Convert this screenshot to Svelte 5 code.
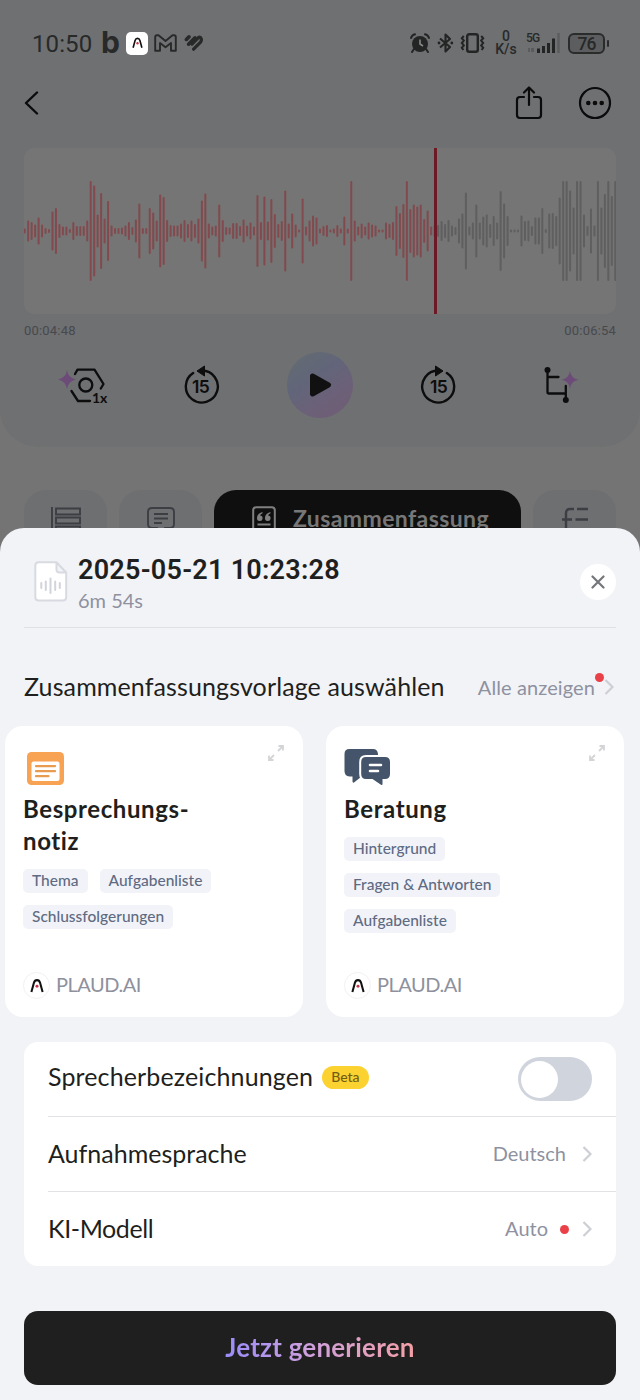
<script lang="ts">
    // bar heights of the waveform, top to bottom, in px
    const wave = [
        5, 21, 18, 13, 27, 13, 6, 4, 39, 46, 14, 9, 9, 4, 18, 10, 10, 10, 21, 100,
        91, 33, 76, 25, 60, 11, 6, 6, 7, 11, 18, 8, 23, 55, 6, 6, 46, 37, 21, 73,
        68, 22, 12, 11, 11, 15, 22, 14, 21, 14, 25, 61, 75, 15, 9, 11, 53, 22, 8, 7,
        16, 16, 10, 23, 11, 17, 9, 72, 18, 69, 19, 64, 34, 14, 20, 81, 15, 35, 13, 3,
        65, 9, 21, 31, 27, 5, 10, 12, 3, 5, 12, 5, 29, 5, 100, 21, 9, 15, 9, 17,
        13, 11, 3, 3, 17, 14, 18, 50, 36, 54, 100, 44, 53, 49, 53, 24, 41, 9, 12, 12,
        20, 14, 22, 11, 8, 25, 35, 77, 9, 17, 53, 17, 29, 33, 14, 30, 17, 80, 55, 30,
        3, 3, 3, 31, 20, 21, 10, 27, 27, 46, 4, 35, 36, 30, 67, 100, 100, 81, 47, 100,
        100, 33, 10, 45, 11, 100, 47, 74, 100, 70, 100
    ];
    const playedBars = 118;

    const templates = [
        {
            icon: "note",
            title: ["Besprechungs-", "notiz"],
            tags: [["Thema", "Aufgabenliste"], ["Schlussfolgerungen"]]
        },
        {
            icon: "chat",
            title: ["Beratung"],
            tags: [["Hintergrund"], ["Fragen & Antworten"], ["Aufgabenliste"]]
        }
    ];

    let speakerLabels = $state(false);
</script>

{#snippet logo()}
    <path d="M1.5 14 L4.2 4 Q5 1.2 7.5 1.2 Q10 1.2 10.8 4 L13.5 14" fill="none" stroke="#111" stroke-width="2.2" />
    <circle cx="7.5" cy="7.8" r="1.6" fill="#c8354a" />
{/snippet}

{#snippet chevron()}
    <svg class="chevron" width="10" height="16" viewBox="0 0 10 16">
        <path d="M1.5 1 L8.5 8 L1.5 15" fill="none" stroke="#cdcfd4" stroke-width="2.2" />
    </svg>
{/snippet}

<div class="phone">
    <div class="recorder">
        <div class="player">
            <div class="status">
                <span class="clock">10:50</span>
                <span class="b">b</span>
                <span class="app-badge">
                    <svg width="11" height="12" viewBox="0 0 15 15">{@render logo()}</svg>
                </span>
                <svg class="gmail" width="23" height="18" viewBox="0 0 23 18">
                    <path d="M1.2 16.8 V3 Q1.2 1.2 3 1.2 H4.5 L11.5 7 L18.5 1.2 H20 Q21.8 1.2 21.8 3 V16.8 H17 V9 L11.5 13.2 L6 9 V16.8 Z" fill="none" stroke="#282929" stroke-width="1.9" stroke-linejoin="round" />
                </svg>
                <svg class="heart" width="20" height="18" viewBox="0 0 20 18">
                    <g fill="none" stroke="#282929" stroke-width="3.6" stroke-linecap="round" stroke-linejoin="round">
                        <path d="M2.4 5.4 L5 2.8" />
                        <path d="M4.6 10.2 L11 3.8" />
                        <path d="M9.6 15.2 L16.6 8.2 Q18.2 5.8 16.6 3.6 Q15.4 2.8 14.4 3.6 L8 10" stroke-width="3.2" />
                    </g>
                </svg>

                <div class="indicators">
                    <svg width="20" height="20" viewBox="0 0 20 20">
                        <circle cx="10" cy="11" r="8" fill="#232424" />
                        <path d="M1 5 Q2 2 5 1.3 M19 5 Q18 2 15 1.3 M4 16 L2 19 M16 16 L18 19" fill="none" stroke="#232424" stroke-width="2" stroke-linecap="round" />
                        <path d="M10 6.5 V11 L13 13" fill="none" stroke="#85878a" stroke-width="1.6" />
                    </svg>
                    <svg class="bluetooth" width="17" height="20" viewBox="0 0 17 20">
                        <path d="M3 5.5 L13 14 L8.5 18.5 V1.5 L13 6 L3 14.5" fill="none" stroke="#232424" stroke-width="2.1" stroke-linejoin="round" />
                        <circle cx="2" cy="10" r="1.4" fill="#232424" />
                        <circle cx="14.8" cy="10" r="1.4" fill="#232424" />
                    </svg>
                    <svg class="vibrate" width="25" height="20" viewBox="0 0 25 20">
                        <rect x="7.2" y="1.2" width="10.6" height="17.6" rx="2" fill="none" stroke="#232424" stroke-width="2.4" />
                        <path d="M3.8 3 L1.8 5.2 L3.8 7.6 L1.8 10 L3.8 12.4 L1.8 14.8 L3.4 17 M21.2 3 L23.2 5.2 L21.2 7.6 L23.2 10 L21.2 12.4 L23.2 14.8 L21.6 17" fill="none" stroke="#232424" stroke-width="2" />
                    </svg>
                    <span class="speed"><span>0</span><span>K/s</span></span>
                    <span class="signal">
                        <span class="five-g">5G</span>
                        <svg width="33" height="20" viewBox="0 0 33 20">
                            <path d="M1 17 h2 m1 0 h3" stroke="#5a5b5d" stroke-width="4" />
                            <path d="M11.5 20 V15.5 M16.5 20 V13 M21.5 20 V10 M26.5 20 V5.5" stroke="#232424" stroke-width="3" />
                            <path d="M31.5 20 V0" stroke="#5c5d5f" stroke-width="2.6" />
                        </svg>
                    </span>
                    <span class="battery">76</span>
                </div>
            </div>

            <div class="toolbar">
                <svg class="back" width="15" height="24" viewBox="0 0 15 24">
                    <path d="M13 1.5 L2 12 L13 22.5" fill="none" stroke="#0b0b0c" stroke-width="2.4" stroke-linecap="round" stroke-linejoin="round" />
                </svg>
                <svg class="share" width="28" height="34" viewBox="0 0 28 34">
                    <g fill="none" stroke="#0b0b0c" stroke-width="2.2" stroke-linecap="round" stroke-linejoin="round">
                        <path d="M9 11 H5 Q2 11 2 14 V29 Q2 32 5 32 H23 Q26 32 26 29 V14 Q26 11 23 11 H19" />
                        <path d="M14 19 V1.5 M9 6.5 L14 1.5 L19 6.5" />
                    </g>
                </svg>
                <svg width="34" height="34" viewBox="0 0 34 34">
                    <circle cx="17" cy="17" r="15" fill="none" stroke="#0b0b0c" stroke-width="2.2" />
                    <circle cx="10.3" cy="17" r="2.3" fill="#0b0b0c" />
                    <circle cx="17" cy="17" r="2.3" fill="#0b0b0c" />
                    <circle cx="23.7" cy="17" r="2.3" fill="#0b0b0c" />
                </svg>
            </div>

            <div class="waveform">
                <svg width="592" height="166" viewBox="0 0 592 166">
                    {#each wave as height, i}
                        <rect x={i * 3.474 - 0.3} y={83 - height / 2} width="2" {height} rx="1" fill={i < playedBars ? "#824a4e" : "#5f5f60"} />
                    {/each}
                    <rect x="410" y="0" width="3" height="166" fill="#6e1a26" />
                </svg>
            </div>
            <div class="times">
                <span>00:04:48</span>
                <span>00:06:54</span>
            </div>

            <div class="controls">
                <svg class="speed-icon" width="52" height="40" viewBox="0 0 52 40">
                    <path d="M10 5 Q11 13 19 14.5 Q11 16 10 24 Q9 16 1 14.5 Q9 13 10 5 Z" fill="#6c4b78" />
                    <g fill="none" stroke="#0d0d0e" stroke-width="2.3" stroke-linecap="round" stroke-linejoin="round">
                        <path d="M18 9 L20.5 4.6 H37.5 L46.5 19 L43.8 23.5" />
                        <path d="M14.5 26 L21 36 H33" />
                        <circle cx="28.8" cy="20" r="6.5" />
                    </g>
                    <text x="35" y="37.5" font-size="14" font-weight="700" fill="#0d0d0e">1x</text>
                </svg>
                <svg class="rewind" width="38" height="40" viewBox="0 0 38 40">
                    <path d="M10.5 8.5 A16 16 0 1 0 19 5.5" transform="rotate(3 19 21)" fill="none" stroke="#0d0d0e" stroke-width="2.4" stroke-linecap="round" />
                    <path d="M15 6 L22.5 1 V11 Z" fill="#0d0d0e" stroke="#0d0d0e" stroke-linejoin="round" />
                    <text class="seconds" x="18.5" y="27.5" text-anchor="middle">15</text>
                </svg>
                <button class="play" aria-label="Play">
                    <svg width="26" height="28" viewBox="0 0 26 28">
                        <path d="M5.5 5 L21.5 14 L5.5 23 Z" fill="#111112" stroke="#111112" stroke-width="5" stroke-linejoin="round" />
                    </svg>
                </button>
                <svg class="forward" width="38" height="40" viewBox="0 0 38 40">
                    <path d="M27.5 8.5 A16 16 0 1 1 19 5.5" transform="rotate(-3 19 21)" fill="none" stroke="#0d0d0e" stroke-width="2.4" stroke-linecap="round" />
                    <path d="M23 6 L15.5 1 V11 Z" fill="#0d0d0e" stroke="#0d0d0e" stroke-linejoin="round" />
                    <text class="seconds" x="18.5" y="27.5" text-anchor="middle">15</text>
                </svg>
                <svg class="branch" width="36" height="40" viewBox="0 0 36 40">
                    <path d="M27 6 Q28 13.5 35.5 14.8 Q28 16 27 23.5 Q26 16 18.5 14.8 Q26 13.5 27 6 Z" fill="#6c4b78" />
                    <path d="M4.5 5 V27 Q4.5 28.5 6 28.5 H22.5 M4.5 12 H15.5 M22.8 21 V35" fill="none" stroke="#0d0d0e" stroke-width="2.3" stroke-linecap="round" />
                    <circle cx="4.5" cy="5" r="3" fill="#0d0d0e" />
                    <circle cx="22.8" cy="35" r="3" fill="#0d0d0e" />
                </svg>
            </div>
        </div>

        <div class="tabs">
            <div class="tab">
                <svg width="32" height="30" viewBox="0 0 32 30">
                    <path d="M2 1 V29 M6 2.5 H30 V8.5 H6 Z M6 11.5 H30 V17.5 H6 Z M6 20.5 H30 V26.5 H6 Z" fill="none" stroke="#3c3e44" stroke-width="1.9" />
                </svg>
            </div>
            <div class="tab">
                <svg width="30" height="30" viewBox="0 0 30 30">
                    <path d="M6 2 H24 Q28 2 28 6 V18 Q28 22 24 22 H19 L15 26 L11 22 H6 Q2 22 2 18 V6 Q2 2 6 2 Z M8 8 H22 M8 12.5 H22 M8 17 H16" fill="none" stroke="#3c3e44" stroke-width="1.9" />
                </svg>
            </div>
            <div class="tab active">
                <svg width="24" height="32" viewBox="0 0 24 32">
                    <rect x="1.2" y="1.2" width="21.6" height="28" rx="3" fill="none" stroke="#808080" stroke-width="2" />
                    <path d="M10.5 6 Q5 7.5 5 12 A2.8 2.8 0 1 0 8 9.4 Q8.5 8 10.5 7.3 Z M18.5 6 Q13 7.5 13 12 A2.8 2.8 0 1 0 16 9.4 Q16.5 8 18.5 7.3 Z" fill="#808080" />
                    <path d="M5.5 18.5 H18.5 M5.5 24 H18.5" stroke="#808080" stroke-width="1.8" />
                </svg>
                <span>Zusammenfassung</span>
            </div>
            <div class="tab">
                <svg width="28" height="30" viewBox="0 0 28 30">
                    <path d="M13 3 H9 Q5 3 5 7 V30 M1 13.5 H11 M16 3 H27 M14.5 13.5 H27" fill="none" stroke="#3c3e44" stroke-width="2.4" />
                </svg>
            </div>
        </div>
    </div>

    <div class="sheet">
        <header>
            <svg class="file" width="34" height="41" viewBox="0 0 34 41">
                <path d="M4.5 1.3 H22.5 L32.2 11.5 V36 Q32.2 39.5 28.7 39.5 H4.7 Q1.3 39.5 1.3 36 V4.8 Q1.3 1.3 4.5 1.3 Z M22.5 1.5 V8.5 Q22.5 11.5 25.5 11.5 H32" fill="#fff" stroke="#d8dae1" stroke-width="2" stroke-linejoin="round" />
                <path d="M7.3 22 V27 M11.8 20.5 V29 M16.5 17.5 V32 M21.2 20.5 V29 M25.8 22 V27" stroke="#d2d4db" stroke-width="2" stroke-linecap="round" />
            </svg>
            <div class="recording">
                <h1>2025-05-21 10:23:28</h1>
                <p>6m 54s</p>
            </div>
            <button class="close" aria-label="Close">
                <svg width="14" height="14" viewBox="0 0 14 14">
                    <path d="M1.5 1.5 L12.5 12.5 M12.5 1.5 L1.5 12.5" stroke="#75767a" stroke-width="2.2" stroke-linecap="round" />
                </svg>
            </button>
        </header>

        <div class="section-title">
            <h2>Zusammenfassungsvorlage auswählen</h2>
            <span class="show-all">Alle anzeigen<i class="dot"></i></span>
            {@render chevron()}
        </div>

        <div class="cards">
            {#each templates as template}
                <article class="card">
                    <div class="card-top">
                        {#if template.icon === "note"}
                            <svg class="note" width="37" height="33" viewBox="0 0 37 33">
                                <rect width="37" height="33" rx="4.5" fill="#f8a254" />
                                <rect x="4.5" y="9.5" width="28" height="19.5" rx="2" fill="#fff" />
                                <path d="M9 14.2 H28 M9 19.2 H28 M9 24.2 H21.5" stroke="#e89c52" stroke-width="2.2" stroke-linecap="round" />
                            </svg>
                        {:else}
                            <svg class="chat" width="47" height="37" viewBox="0 0 47 37">
                                <path d="M5.5 0 H29 Q33.5 0 34 5 V28 H17 L10 33.5 Q8.5 34 8.5 32.5 V27.5 H5.5 Q0.5 27 0.5 22 V5 Q0.5 0 5.5 0 Z" fill="#44546a" />
                                <path d="M22 8 H41 Q46 8 46 13 V25 Q46 30 41 30 H38.5 V35 Q38.5 36.5 37 35.7 L28.5 30 H22 Q17.2 30 17.2 25 V13 Q17.2 8 22 8 Z" fill="#44546a" stroke="#fff" stroke-width="4" />
                                <path d="M22 8 H41 Q46 8 46 13 V25 Q46 30 41 30 H38.5 V35 Q38.5 36.5 37 35.7 L28.5 30 H22 Q17.2 30 17.2 25 V13 Q17.2 8 22 8 Z" fill="#44546a" />
                                <path d="M26 16 H37 M26 22 H34" stroke="#fff" stroke-width="2.6" stroke-linecap="round" />
                            </svg>
                        {/if}
                        <svg class="expand" width="18" height="18" viewBox="0 0 18 18">
                            <path d="M11 7 L15.5 2.5 M11.5 2 H16 V6.5 M7 11 L2.5 15.5 M2 11.5 V16 H6.5" fill="none" stroke="#d3d4d6" stroke-width="1.8" />
                        </svg>
                    </div>
                    <h3>
                        {#each template.title as line}
                            <span>{line}</span>
                        {/each}
                    </h3>
                    <div class="tags">
                        {#each template.tags as row}
                            <div class="tag-row">
                                {#each row as tag}
                                    <span class="tag">{tag}</span>
                                {/each}
                            </div>
                        {/each}
                    </div>
                    <div class="author">
                        <span class="avatar">
                            <svg width="14" height="14" viewBox="0 0 15 15">{@render logo()}</svg>
                        </span>
                        <span class="name">PLAUD.AI</span>
                    </div>
                </article>
            {/each}
        </div>

        <div class="settings">
            <div class="row">
                <span class="label speaker">Sprecherbezeichnungen</span>
                <span class="beta">Beta</span>
                <button
                    class="toggle"
                    class:on={speakerLabels}
                    aria-label="Sprecherbezeichnungen"
                    onclick={() => (speakerLabels = !speakerLabels)}
                ></button>
            </div>
            <div class="row">
                <span class="label">Aufnahmesprache</span>
                <span class="value">Deutsch</span>
                {@render chevron()}
            </div>
            <div class="row">
                <span class="label model">KI-Modell</span>
                <span class="value">Auto</span>
                <i class="dot"></i>
                {@render chevron()}
            </div>
        </div>

        <button class="generate"><span>Jetzt generieren</span></button>
    </div>
</div>

<style>
    :global(body) {
        background: #f2f3f7;
    }

    .phone {
        width: 640px;
        height: 1400px;
        overflow: hidden;
        font-family: Lato, "Open Sans", sans-serif;
        font-variant-ligatures: none;
        color: #1f1f20;
        background: #f2f3f7;
    }

    h1, h2, h3, p {
        margin: 0;
    }

    svg {
        display: block;
        flex: none;
    }

    button {
        border: 0;
        padding: 0;
        font: inherit;
    }

    .recorder {
        height: 560px;
        overflow: hidden;
        background: #747474;
    }

    .player {
        height: 447px;
        box-sizing: border-box;
        padding: 0 24px;
        border-radius: 0 0 38px 38px;
        background: #6e7072;
    }

    .status {
        display: flex;
        align-items: center;
        height: 74px;
        padding: 12px 7px 0 8px;
        box-sizing: border-box;
        color: #282929;
    }

    .clock {
        width: 69px;
        font-family: Roboto, sans-serif;
        font-size: 24px;
        line-height: 24px;
        letter-spacing: 0.1px;
        padding-top: 2px;
    }

    .b {
        width: 25px;
        font-family: Inter, sans-serif;
        font-size: 30px;
        font-weight: 700;
        line-height: 30px;
        margin-top: -2px;
    }

    .app-badge {
        display: flex;
        align-items: center;
        justify-content: center;
        width: 22px;
        height: 23px;
        border-radius: 5px;
        background: #fff;
    }

    .gmail {
        margin-left: 6px;
    }

    .heart {
        margin-left: 7px;
    }

    .indicators {
        display: flex;
        align-items: center;
        margin-left: auto;
        font-family: Roboto, sans-serif;
        font-weight: 500;
    }

    .bluetooth {
        margin-left: 7px;
    }

    .vibrate {
        margin-left: 6px;
    }

    .speed {
        display: flex;
        flex-direction: column;
        align-items: center;
        width: 24px;
        margin-left: 9px;
        font-size: 14px;
        line-height: 13px;
    }

    .signal {
        position: relative;
        margin-left: 9px;
    }

    .five-g {
        position: absolute;
        left: -1px;
        top: -1px;
        font-size: 12px;
        line-height: 12px;
        letter-spacing: -0.7px;
    }

    .battery {
        position: relative;
        width: 33px;
        height: 17px;
        margin: 0 4px 0 8px;
        border: 2px solid #2a2b2b;
        border-radius: 6px;
        background: #5c5d5f;
        font-size: 17.5px;
        line-height: 18px;
        letter-spacing: -0.9px;
        text-align: center;
    }

    .battery::after {
        content: "";
        position: absolute;
        right: -6px;
        top: 5px;
        width: 2px;
        height: 7px;
        border-radius: 1px;
        background: #2a2b2b;
    }

    .toolbar {
        display: flex;
        align-items: center;
        height: 58px;
        margin-bottom: 16px;
        padding-right: 4px;
    }

    .share {
        margin-left: auto;
        margin-right: 35px;
    }

    .waveform {
        height: 166px;
        border-radius: 10px;
        overflow: hidden;
        background: #757575;
    }

    .times {
        display: flex;
        justify-content: space-between;
        padding-top: 9px;
        font-family: Roboto, sans-serif;
        font-size: 13px;
        line-height: 15px;
        letter-spacing: 0.2px;
        color: #48494d;
    }

    .controls {
        display: grid;
        grid-template-columns: repeat(5, 1fr);
        align-items: center;
        justify-items: center;
        height: 66px;
        margin-top: 14px;
    }

    .rewind {
        margin-right: 2px;
    }

    .forward {
        margin-left: 2px;
    }

    .branch {
        margin-left: 8px;
    }

    .seconds {
        font-family: Inter, sans-serif;
        font-size: 17.5px;
        font-weight: 600;
        letter-spacing: -0.8px;
        fill: #0d0d0e;
    }

    .play {
        display: flex;
        align-items: center;
        justify-content: center;
        width: 66px;
        height: 66px;
        border-radius: 50%;
        background: linear-gradient(145deg, #626d70 0%, #62657a 40%, #6b6178 65%, #705c74 100%);
    }

    .tabs {
        display: flex;
        gap: 12px;
        padding: 43px 24px 0;
    }

    .tab {
        display: flex;
        justify-content: center;
        width: 83px;
        height: 66px;
        box-sizing: border-box;
        padding-top: 16px;
        border-radius: 22px;
        background: #6d6f71;
    }

    .active {
        width: 307px;
        gap: 17px;
        padding-left: 6px;
        background: #0f0f10;
        color: #777;
        font-size: 23px;
        font-weight: 700;
        line-height: 25px;
        letter-spacing: 0.4px;
    }

    .sheet {
        position: relative;
        height: 872px;
        box-sizing: border-box;
        margin-top: -32px;
        padding: 0 24px;
        border-radius: 24px 24px 0 0;
        background: #f2f3f7;
    }

    header {
        display: flex;
        align-items: center;
        height: 100px;
        box-sizing: border-box;
        padding: 8px 0 0 10px;
        border-bottom: 1px solid #dfe0e5;
    }

    .recording {
        margin: 3px 0 0 10px;
    }

    h1 {
        font-family: Roboto, sans-serif;
        font-size: 27px;
        font-weight: 600;
        line-height: 34px;
        letter-spacing: 0.25px;
    }

    .recording p {
        margin-top: -1px;
        font-size: 20px;
        line-height: 28px;
        color: #8e91a0;
    }

    .close {
        display: flex;
        align-items: center;
        justify-content: center;
        width: 36px;
        height: 36px;
        margin-left: auto;
        border-radius: 50%;
        background: #fff;
    }

    .section-title {
        display: flex;
        align-items: center;
        height: 98px;
        box-sizing: border-box;
        padding: 20px 2px 0 0;
    }

    h2 {
        margin-top: -3px;
        font-size: 25px;
        font-weight: 400;
        letter-spacing: 0.12px;
        white-space: nowrap;
    }

    .show-all {
        position: relative;
        margin: -1px 9px 0 auto;
        font-size: 20px;
        letter-spacing: 0.1px;
        white-space: nowrap;
        color: #8e91a0;
    }

    .dot {
        width: 9px;
        height: 9px;
        border-radius: 50%;
        background: #ea4048;
    }

    .show-all .dot {
        position: absolute;
        top: -2px;
        right: -9px;
    }

    .cards {
        display: grid;
        grid-template-columns: 298px 298px;
        gap: 23px;
        margin: 0 -19px;
    }

    .card {
        display: flex;
        flex-direction: column;
        height: 291px;
        box-sizing: border-box;
        padding: 18px;
        border-radius: 18px;
        background: #fff;
    }

    .card-top {
        display: flex;
        justify-content: space-between;
        height: 49px;
    }

    .note {
        margin: 8px 0 0 4px;
    }

    .chat {
        margin-top: 5px;
    }

    h3 {
        font-size: 24px;
        font-weight: 700;
        line-height: 32px;
        letter-spacing: 0.6px;
    }

    h3 span {
        display: block;
    }

    .tags {
        display: flex;
        flex-direction: column;
        gap: 12px;
        margin-top: 12px;
    }

    .tag-row {
        display: flex;
        gap: 12px;
    }

    .tag {
        height: 24px;
        padding: 0 9px;
        border-radius: 5px;
        background: #f2f3f8;
        color: #5f6b83;
        font-size: 15.5px;
        font-weight: 500;
        line-height: 22px;
        white-space: nowrap;
    }

    .author {
        display: flex;
        align-items: center;
        gap: 6px;
        margin-top: auto;
        font-size: 20px;
        color: #8e919d;
    }

    .name {
        margin-top: -3px;
        letter-spacing: -0.5px;
    }

    .avatar {
        display: flex;
        align-items: center;
        justify-content: center;
        width: 25px;
        height: 25px;
        border: 1px solid #f1f1f3;
        border-radius: 50%;
    }

    .settings {
        margin-top: 25px;
        padding-left: 24px;
        border-radius: 14px;
        background: #fff;
    }

    .row {
        display: flex;
        align-items: center;
        height: 74px;
        padding-right: 24px;
    }

    .row + .row {
        border-top: 1px solid #e1e2e6;
    }

    .label {
        margin: -3px auto 0 0;
        font-size: 25px;
    }

    .speaker {
        margin: -6px 0 0;
        letter-spacing: 0.13px;
    }

    .model {
        letter-spacing: -0.4px;
    }

    .beta {
        height: 23px;
        margin: -3px auto 0 9px;
        padding: 0 9px;
        border-radius: 12px;
        background: #fbd22f;
        color: #745d15;
        font-size: 14px;
        font-weight: 500;
        line-height: 22px;
    }

    .value {
        margin: -2px 16px 0 0;
        font-size: 20px;
        color: #8e91a0;
    }

    .row .dot {
        margin: 0 13px 0 -4px;
    }

    .toggle {
        width: 74px;
        height: 44px;
        border-radius: 22px;
        background: #d0d5dd;
    }

    .toggle::before {
        content: "";
        display: block;
        width: 37px;
        height: 37px;
        margin-left: 3px;
        border-radius: 50%;
        background: #fff;
    }

    .toggle.on {
        background: #4cb963;
    }

    .toggle.on::before {
        margin-left: 34px;
    }

    .generate {
        display: block;
        width: 592px;
        height: 74px;
        margin-top: 45px;
        padding-bottom: 3px;
        border-radius: 14px;
        background: #1f1f1f;
        font-size: 26px;
        font-weight: 700;
        letter-spacing: 0.2px;
    }

    .generate span {
        background: linear-gradient(90deg, #9a8cfa, #cfa0dc 45%, #f59fa6);
        background-clip: text;
        -webkit-background-clip: text;
        color: transparent;
    }
</style>
